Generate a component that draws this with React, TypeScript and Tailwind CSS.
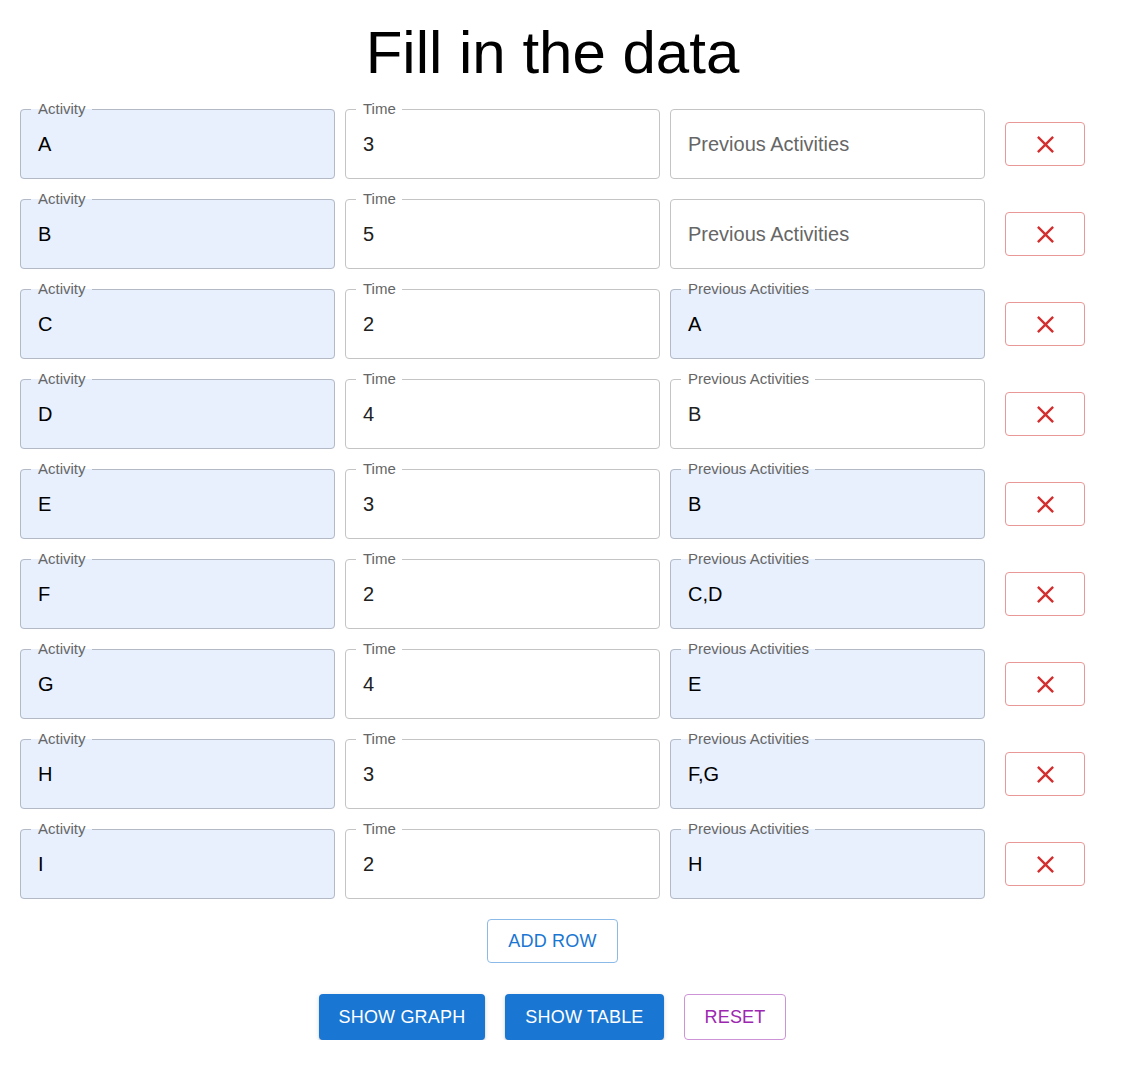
const rows = [
  { activity: "A", time: "3", prev: "", prevFilled: false },
  { activity: "B", time: "5", prev: "", prevFilled: false },
  { activity: "C", time: "2", prev: "A", prevFilled: true },
  { activity: "D", time: "4", prev: "B", prevFilled: false },
  { activity: "E", time: "3", prev: "B", prevFilled: true },
  { activity: "F", time: "2", prev: "C,D", prevFilled: true },
  { activity: "G", time: "4", prev: "E", prevFilled: true },
  { activity: "H", time: "3", prev: "F,G", prevFilled: true },
  { activity: "I", time: "2", prev: "H", prevFilled: true },
];

function Field({ label, value, filled }: { label: string; value: string; filled: boolean }) {
  const box = filled
    ? "bg-[#e8f0fe] border-[#b3bac6]"
    : "bg-white border-[#c4c4c4]";
  return (
    <fieldset className={`w-[315px] min-w-0 border rounded ${box}`}>
      {value ? (
        <legend className="ml-[10px] pl-[7px] pr-[6px] text-[15px] leading-4 text-[#666]">
          {label}
        </legend>
      ) : (
        <legend className="ml-[10px] p-0 w-0 h-4" />
      )}
      <div className="h-[68px] -mt-[7px] flex items-center px-[17px] text-[20px]">
        {value ? (
          <span className={filled ? "text-black" : "text-[#212121]"}>{value}</span>
        ) : (
          <span className="text-[#666]">{label}</span>
        )}
      </div>
    </fieldset>
  );
}

function DeleteButton() {
  return (
    <button className="ml-[10px] mt-2 w-20 h-11 flex items-center justify-center rounded border border-[#e99797] bg-white text-[#d32f2f]">
      <svg viewBox="0 0 24 24" width="29" height="29" fill="currentColor">
        <path d="M19 6.41 17.59 5 12 10.59 6.41 5 5 6.41 10.59 12 5 17.59 6.41 19 12 13.41 17.59 19 19 17.59 13.41 12z" />
      </svg>
    </button>
  );
}

const raised =
  "shadow-[0_3px_1px_-2px_rgba(0,0,0,0.2),0_2px_2px_0_rgba(0,0,0,0.14),0_1px_5px_0_rgba(0,0,0,0.12)]";

export default function App() {
  return (
    <div className="w-fit px-5 font-['Liberation_Sans',Arial,sans-serif] bg-white">
      <h1 className="mt-[17px] text-center text-[60px] leading-[72px] text-black">Fill in the data</h1>
      <div className="mt-3 flex flex-col gap-3">
        {rows.map((r) => (
          <div key={r.activity} className="flex items-center gap-[10px]">
            <Field label="Activity" value={r.activity} filled />
            <Field label="Time" value={r.time} filled={false} />
            <Field label="Previous Activities" value={r.prev} filled={r.prevFilled} />
            <DeleteButton />
          </div>
        ))}
      </div>
      <div className="mt-5 flex justify-center">
        <button className="h-11 px-5 rounded border border-[#8cbae8] text-[#1976d2] text-[18px] tracking-[0.01em] bg-white">
          ADD ROW
        </button>
      </div>
      <div className="mt-[31px] flex justify-center gap-5">
        <button className={`h-[46px] px-5 rounded bg-[#1976d2] text-white text-[18px] tracking-[0.01em] ${raised}`}>
          SHOW GRAPH
        </button>
        <button className={`h-[46px] px-5 rounded bg-[#1976d2] text-white text-[18px] tracking-[0.01em] ${raised}`}>
          SHOW TABLE
        </button>
        <button className="h-[46px] px-5 rounded border border-[#cd93d7] text-[#9c27b0] text-[18px] tracking-[0.01em] bg-white">
          RESET
        </button>
      </div>
    </div>
  );
}
